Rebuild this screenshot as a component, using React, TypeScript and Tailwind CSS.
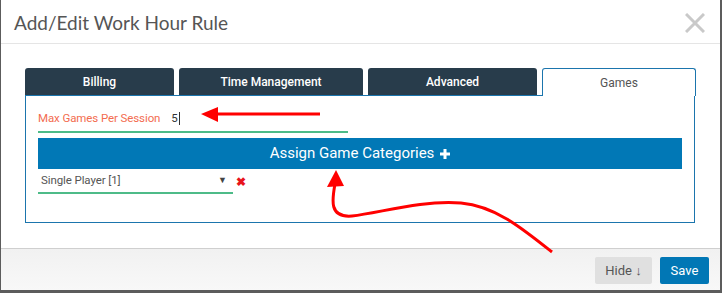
import React from 'react';

const tabs = [
  { label: 'Billing', w: 'w-[149px]' },
  { label: 'Time Management', w: 'w-[184px]' },
  { label: 'Advanced', w: 'w-[169px]' },
];

export default function App() {
  return (
    <div className="relative w-[722px] h-[293px] overflow-hidden bg-[#5c5c5c] font-['Roboto',sans-serif]">
      {/* modal */}
      <div className="ml-px w-[719px] h-[290px] bg-white flex flex-col">
        {/* header */}
        <div className="h-[44px] shrink-0 border-b border-[#e5e5e5] flex items-center justify-between pl-[13px] pr-[15px]">
          <h2 className="font-['Lato',sans-serif] text-[19px] text-[#555] leading-none pt-[1px]">Add/Edit Work Hour Rule</h2>
          <svg width="20" height="20" viewBox="0 0 20 20" className="mt-[3px]">
            <path d="M1 1 L19 19 M19 1 L1 19" stroke="#c9c9c9" strokeWidth="3" />
          </svg>
        </div>

        {/* body */}
        <div className="flex-1 pt-[24px] pl-[24px] pr-[24px]">
          {/* tabs */}
          <div className="flex items-end h-[27px] relative z-10">
            {tabs.map((t) => (
              <div
                key={t.label}
                className={`${t.w} h-[27px] mr-[5px] rounded-t-[3px] bg-[#283c4b] text-white text-[12px] font-medium flex items-center justify-center pt-[1px]`}
              >
                {t.label}
              </div>
            ))}
            <div className="w-[154px] h-[28px] -mb-px rounded-t-[3px] bg-white border border-b-0 border-[#1b75ad] text-[#555] text-[12px] flex items-center justify-center">
              Games
            </div>
          </div>

          {/* panel */}
          <div className="w-[670px] h-[128px] border border-[#1b75ad] pt-[8px] px-[12px]">
            <div className="w-[310px] h-[29px] border-b-2 border-[#4dbb88] flex items-center pt-[2px] text-[11.5px]">
              <span className="text-[#f36c4f] tracking-[-0.1px]">Max Games Per Session</span>
              <span className="ml-[11px] text-[#333] flex items-center">
                5<span className="inline-block w-px h-[13px] bg-[#333] ml-px" />
              </span>
            </div>
            <button className="mt-[5px] w-full h-[31px] bg-[#0178b6] text-white text-[15px] flex items-center justify-center gap-[6px]">
              Assign Game Categories
              <svg width="10" height="10" viewBox="0 0 10 10">
                <path d="M5 0 V10 M0 5 H10" stroke="white" strokeWidth="3" />
              </svg>
            </button>
            <div className="flex items-center">
              <div className="w-[195px] h-[25px] border-b-2 border-[#4dbb88] flex items-center justify-between pl-[3px] pr-[6px] text-[11.5px] text-[#555]">
                <span className="tracking-[-0.1px]">Single Player [1]</span>
                <span className="text-[9px] text-[#444]">▼</span>
              </div>
              <span className="ml-[3px] text-[#e8141c] text-[12px] font-bold leading-none">✖</span>
            </div>
          </div>
        </div>

        {/* footer */}
        <div className="h-[42px] shrink-0 border-t border-[#cfcfcf] bg-gradient-to-b from-[#f1f1f1] to-[#f8f8f8] flex items-center justify-end gap-[8px] pr-[11px] pt-[2px]">
          <button className="w-[57px] h-[27px] rounded-[2px] bg-[#e0e0e0] text-[#555] text-[13px]">Hide ↓</button>
          <button className="w-[49px] h-[27px] rounded-[2px] bg-[#0177b5] text-white text-[13px]">Save</button>
        </div>
      </div>

      {/* annotation arrows */}
      <svg className="absolute inset-0 pointer-events-none" width="722" height="293">
        <line x1="320" y1="114" x2="212" y2="114" stroke="#ff0000" strokeWidth="3" />
        <polygon points="201,114 218,107 218,122" fill="#ff0000" />
        <path
          d="M335 184 C332 200, 329 218, 352 216 C380 213, 420 200, 461 203 C495 206, 522 228, 552 252"
          stroke="#ff0000"
          strokeWidth="3"
          fill="none"
        />
        <polygon points="336,170 327,187 344,186" fill="#ff0000" />
      </svg>
    </div>
  );
}
